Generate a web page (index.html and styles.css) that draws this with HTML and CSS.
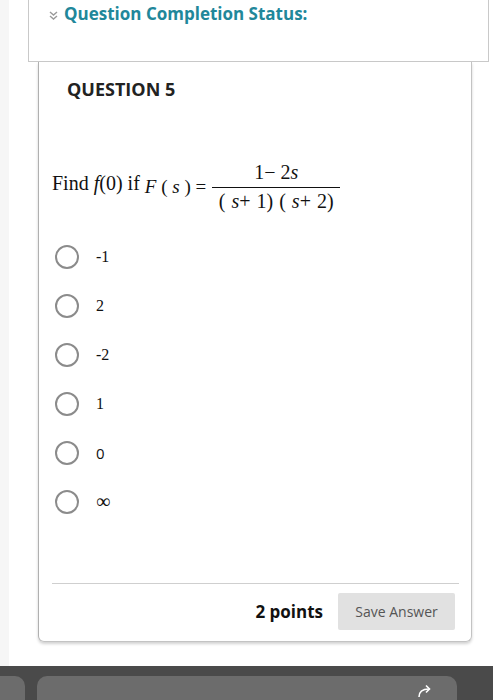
FILE: index.html
```html
<!DOCTYPE html>
<html lang="en">
<head>
    <meta charset="UTF-8">
    <title>Question 5</title>
    <link rel="stylesheet" href="styles.css">
</head>
<body>
    <div class="page">
        <div class="status">
            <svg class="chevron" width="9" height="9" viewBox="0 0 9 9">
                <path d="M1 1 L4.5 4 L8 1 M1 5 L4.5 8 L8 5" fill="none" stroke="#9a9a9a" stroke-width="1.4"/>
            </svg>
            <span class="status-title">Question Completion Status:</span>
        </div>
        <div class="card">
            <h2 class="q-title">QUESTION 5</h2>
            <div class="prompt">
                <span class="lead">Find <i>f</i>(0) if</span>
                <span class="lhs"><i>F</i> ( <i>s</i> ) =</span>
                <span class="frac">
                    <span class="num">1&#8722; 2<i>s</i></span>
                    <span class="den">( <i>s</i>+ 1) ( <i>s</i>+ 2)</span>
                </span>
            </div>
            <ul class="options">
                <li><span class="radio"></span><span class="label">-1</span></li>
                <li><span class="radio"></span><span class="label">2</span></li>
                <li><span class="radio"></span><span class="label">-2</span></li>
                <li><span class="radio"></span><span class="label">1</span></li>
                <li><span class="radio"></span><span class="label sans">0</span></li>
                <li><span class="radio"></span><span class="label inf">&#8734;</span></li>
            </ul>
            <div class="divider"></div>
            <div class="footer">
                <span class="points">2 points</span>
                <button class="btn">Save Answer</button>
            </div>
        </div>
    </div>
    <div class="bar">
        <div class="pill small"></div>
        <div class="pill">
            <svg class="share" width="16" height="14" viewBox="0 0 16 14">
                <path d="M2 13 C2 7 6 5 12 5" fill="none" stroke="#fff" stroke-width="1.6"/>
                <path d="M9 1.5 L12.5 5 L9 8.5" fill="none" stroke="#fff" stroke-width="1.6"/>
            </svg>
        </div>
    </div>
</body>
</html>
```

FILE: styles.css
```css
body {
    margin: 0;
    background: #f6f6f6;
    font-family: "Open Sans", Arial, sans-serif;
    color: #222;
    overflow: hidden;
}
.page {
    margin-left: 9px;
    background: #fff;
    padding: 0 4px 24px 19px;
}
.status {
    height: 59px;
    border: 1px solid #c9c9c9;
    border-top: none;
    display: flex;
    align-items: flex-start;
    padding: 2px 0 0 20px;
    gap: 6px;
}
.chevron {
    margin-top: 9px;
}
.status-title {
    color: #21879a;
    font-size: 17px;
    font-weight: 700;
    line-height: 24px;
}
.card {
    margin-left: 10px;
    width: 432px;
    border: 1px solid #c3c3c3;
    border-left-color: #b0b0b0;
    border-top: none;
    border-radius: 0 0 6px 6px;
    box-shadow: 0 2px 3px rgba(0, 0, 0, .18);
    padding: 15px 0 11px;
}
.q-title {
    margin: 0 0 0 28px;
    font-size: 18px;
    font-weight: 700;
    line-height: 24px;
}
.prompt {
    display: flex;
    align-items: center;
    margin: 60px 0 0 13px;
    font-family: "Liberation Serif", "Times New Roman", serif;
    font-size: 20px;
    color: #111;
}
.lead {
    margin-bottom: 8px;
}
.lhs {
    margin-left: 5px;
    font-size: 19px;
}
.frac {
    display: flex;
    flex-direction: column;
    align-items: center;
    margin-left: 6px;
    font-size: 20px;
}
.num {
    padding-bottom: 3px;
    border-bottom: 1px solid #111;
    width: 128px;
    text-align: center;
}
.den {
    padding-top: 2px;
    word-spacing: 1px;
}
.options {
    list-style: none;
    margin: 19px 0 0;
    padding: 0;
}
.options li {
    display: flex;
    align-items: center;
    height: 49px;
    padding-left: 16px;
}
.radio {
    width: 20px;
    height: 20px;
    border: 2px solid #8b8b8b;
    border-radius: 50%;
}
.label {
    margin-left: 17px;
    font-family: "Liberation Serif", "Times New Roman", serif;
    font-size: 16px;
    color: #111;
}
.label.sans {
    font-family: "Open Sans", Arial, sans-serif;
    font-size: 15px;
}
.label.inf {
    font-size: 20px;
}
.divider {
    margin: 57px 12px 0 13px;
    border-top: 1px solid #cfcfcf;
}
.footer {
    display: flex;
    justify-content: flex-end;
    align-items: center;
    gap: 15px;
    padding: 9px 16px 0 0;
}
.points {
    font-size: 17px;
    font-weight: 700;
    color: #111;
}
.btn {
    width: 117px;
    height: 37px;
    border: none;
    border-radius: 2px;
    background: #e1e1e1;
    color: #555;
    font-family: "Open Sans", Arial, sans-serif;
    font-size: 14px;
    padding: 0;
}
.bar {
    background: #4a4a4a;
    height: 40px;
    display: flex;
    gap: 12px;
    padding-top: 10px;
    margin-left: -10px;
}
.pill {
    width: 420px;
    height: 40px;
    background: #6c6c6c;
    border-radius: 10px;
    position: relative;
}
.pill.small {
    width: 35px;
}
.share {
    position: absolute;
    right: 24px;
    top: 8px;
}
```
